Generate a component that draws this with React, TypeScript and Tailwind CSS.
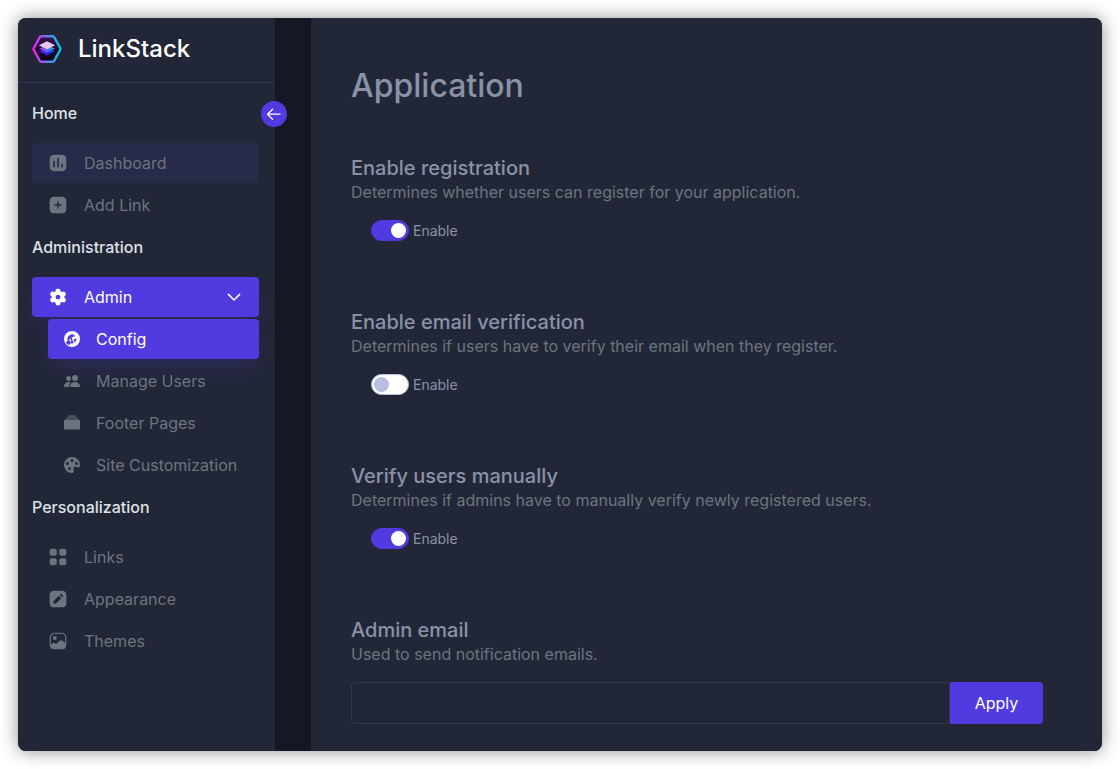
import React, { type ReactNode } from "react";
import {
  BsCollectionFill,
  BsPaletteFill,
  BsPeopleFill,
  BsWrenchAdjustableCircleFill,
} from "react-icons/bs";

function Logo() {
  return (
    <svg viewBox="0 0 30 30" className="size-[30px] shrink-0" aria-hidden="true">
      <defs>
        <linearGradient id="rim" x1="0" x2="1" y1="0" y2="0">
          <stop offset="0" stopColor="#f21cf0" />
          <stop offset="0.5" stopColor="#6a7bf0" />
          <stop offset="1" stopColor="#06c3dc" />
        </linearGradient>
        <linearGradient id="core" x1="0" x2="0" y1="0" y2="1">
          <stop offset="0" stopColor="#351150" />
          <stop offset="1" stopColor="#08020f" />
        </linearGradient>
        <linearGradient id="mid" x1="0" x2="1" y1="0" y2="0">
          <stop offset="0" stopColor="#b026f5" />
          <stop offset="1" stopColor="#18a8ee" />
        </linearGradient>
        <linearGradient id="low" x1="0" x2="1" y1="0" y2="0">
          <stop offset="0" stopColor="#6a10d8" />
          <stop offset="0.6" stopColor="#1522ff" />
          <stop offset="1" stopColor="#1260c8" />
        </linearGradient>
      </defs>
      <path
        d="M9.300 2.300h11.400q1 0 1.600 1l5.700 10.400q.7 1.300 0 2.600l-5.700 10.400q-.6 1-1.600 1H9.300q-1 0-1.600-1L2 16.300q-.7-1.300 0-2.600L7.700 3.300q.6-1 1.600-1z"
        fill="url(#core)"
        stroke="url(#rim)"
        strokeWidth="2.400"
      />
      <path d="M7 17.300l8-3.300 8 3.300-8 4.200z" fill="url(#low)" />
      <path d="M7 14.500l8-3.300 8 3.300-8 4.200z" fill="url(#mid)" />
      <path d="M6.800 11.200L15 7.300l8.200 3.900L15 15.200z" fill="#e6c8ec" />
    </svg>
  );
}

const glyph = "size-5 shrink-0";

function ChartIcon() {
  return (
    <svg viewBox="0 0 24 24" className={glyph} fill="currentColor" fillRule="evenodd" aria-hidden="true">
      <path d="M7.810 2H16.190C19.830 2 22 4.170 22 7.810V16.190C22 19.830 19.830 22 16.190 22H7.810C4.170 22 2 19.830 2 16.190V7.810C2 4.170 4.170 2 7.810 2ZM7.200 9.300C6.600 9.300 6.200 9.700 6.200 10.300V16.600C6.200 17.200 6.600 17.600 7.200 17.600S8.200 17.200 8.200 16.600V10.300C8.200 9.700 7.800 9.300 7.200 9.300ZM12.100 6C11.500 6 11.100 6.400 11.100 7V16.600C11.100 17.200 11.500 17.600 12.100 17.600S13.100 17.200 13.100 16.600V7C13.100 6.400 12.700 6 12.100 6ZM16.900 12.800C16.300 12.800 15.900 13.200 15.900 13.800V16.600C15.900 17.200 16.300 17.600 16.900 17.600S17.900 17.200 17.900 16.600V13.800C17.900 13.200 17.500 12.800 16.900 12.800Z" />
    </svg>
  );
}

function PlusIcon() {
  return (
    <svg viewBox="0 0 24 24" className={glyph} fill="currentColor" fillRule="evenodd" aria-hidden="true">
      <path d="M7.330 2H16.660C20.060 2 22 3.920 22 7.330V16.670C22 20.060 20.070 22 16.670 22H7.330C3.920 22 2 20.060 2 16.670V7.330C2 3.920 3.920 2 7.330 2ZM12.820 12.830H15.660C16.120 12.820 16.490 12.450 16.490 11.990C16.490 11.530 16.120 11.160 15.660 11.160H12.820V8.340C12.820 7.880 12.450 7.510 11.990 7.510C11.530 7.510 11.160 7.880 11.160 8.340V11.160H8.330C7.870 11.160 7.500 11.540 7.500 11.990C7.500 12.450 7.870 12.820 8.330 12.830H11.160V15.660C11.160 16.120 11.530 16.490 11.990 16.490C12.450 16.490 12.820 16.120 12.820 15.660V12.830Z" />
    </svg>
  );
}

function GearIcon() {
  return (
    <svg viewBox="0 0 24 24" className={glyph} fill="currentColor" fillRule="evenodd" aria-hidden="true">
      <path d="M20.402 13.580C20.760 13.770 21.036 14.070 21.230 14.370C21.608 14.990 21.577 15.750 21.210 16.420L20.494 17.620C20.116 18.260 19.411 18.660 18.686 18.660C18.328 18.660 17.930 18.560 17.603 18.360C17.337 18.190 17.031 18.130 16.704 18.130C15.692 18.130 14.844 18.960 14.814 19.950C14.814 21.100 13.873 22 12.697 22H11.307C10.121 22 9.180 21.100 9.180 19.950C9.160 18.960 8.312 18.130 7.300 18.130C6.963 18.130 6.656 18.190 6.401 18.360C6.074 18.560 5.665 18.660 5.318 18.660C4.582 18.660 3.877 18.260 3.499 17.620L2.794 16.420C2.416 15.770 2.395 14.990 2.774 14.370C2.937 14.070 3.244 13.770 3.591 13.580C3.877 13.440 4.061 13.210 4.235 12.940C4.746 12.080 4.439 10.950 3.571 10.440C2.559 9.870 2.232 8.600 2.814 7.610L3.499 6.430C4.092 5.440 5.359 5.090 6.381 5.670C7.270 6.150 8.425 5.830 8.946 4.980C9.109 4.700 9.201 4.400 9.180 4.100C9.160 3.710 9.272 3.340 9.467 3.040C9.845 2.420 10.530 2.020 11.276 2H12.717C13.474 2 14.159 2.420 14.537 3.040C14.721 3.340 14.844 3.710 14.814 4.100C14.793 4.400 14.885 4.700 15.049 4.980C15.570 5.830 16.724 6.150 17.623 5.670C18.635 5.090 19.912 5.440 20.494 6.430L21.179 7.610C21.772 8.600 21.445 9.870 20.422 10.440C19.554 10.950 19.247 12.080 19.769 12.940C19.932 13.210 20.116 13.440 20.402 13.580ZM9.109 12.010C9.109 13.580 10.407 14.830 12.012 14.830C13.617 14.830 14.885 13.580 14.885 12.010C14.885 10.440 13.617 9.180 12.012 9.180C10.407 9.180 9.109 10.440 9.109 12.010Z" />
    </svg>
  );
}

function GridIcon() {
  return (
    <svg viewBox="0 0 24 24" className={glyph} fill="currentColor" aria-hidden="true">
      <rect x="2" y="2" width="8.500" height="8.500" rx="2.500" />
      <rect x="13.500" y="2" width="8.500" height="8.500" rx="2.500" />
      <rect x="2" y="13.500" width="8.500" height="8.500" rx="2.500" />
      <rect x="13.500" y="13.500" width="8.500" height="8.500" rx="2.500" />
    </svg>
  );
}

function PencilIcon() {
  return (
    <svg viewBox="0 0 24 24" className={glyph} fill="currentColor" fillRule="evenodd" aria-hidden="true">
      <path d="M7.330 2H16.670C20.070 2 22 3.930 22 7.330V16.670C22 20.070 20.070 22 16.670 22H7.330C3.930 22 2 20.070 2 16.670V7.330C2 3.930 3.930 2 7.330 2ZM13.100 8L7.200 13.800C6.900 14.100 6.700 14.500 6.700 14.900L6.500 16.900C6.500 17.300 6.800 17.600 7.200 17.600L9.200 17.400C9.600 17.400 10 17.200 10.300 16.900L16 11ZM14.100 7.100L16.900 10L17.700 9.200C18.200 8.700 18.200 7.900 17.700 7.400L16.600 6.400C16.100 5.900 15.400 5.900 14.900 6.400Z" />
    </svg>
  );
}

function ImageIcon() {
  return (
    <svg viewBox="0 0 24 24" className={glyph} aria-hidden="true">
      <rect x="2.700" y="2.700" width="18.600" height="18.600" rx="5" fill="none" stroke="currentColor" strokeWidth="1.400" />
      <circle cx="8.200" cy="8.300" r="2.400" fill="currentColor" />
      <path
        d="M2.500 17.500L5.600 14.700C6.400 14 7.300 14 8.100 14.600C9.300 15.500 10.300 15.600 11.300 14.500L14 11.800C15.100 10.700 16.600 10.700 17.700 11.700L21.600 15.500V17C21.600 20 20 21.700 17 21.700H7C4.300 21.700 2.500 20 2.500 17.500Z"
        fill="currentColor"
      />
    </svg>
  );
}

function ChevronIcon() {
  return (
    <svg viewBox="0 0 24 24" className="size-[18px]" fill="none" stroke="currentColor" strokeWidth="2" strokeLinecap="round" strokeLinejoin="round" aria-hidden="true">
      <path d="M4.500 8.500l7.500 7.500 7.500-7.500" />
    </svg>
  );
}

function ArrowIcon() {
  return (
    <svg viewBox="0 0 24 24" className="size-5" fill="none" stroke="currentColor" strokeWidth="1.500" strokeLinecap="round" strokeLinejoin="round" aria-hidden="true">
      <path d="M4.250 12.270H19.250M10.300 18.300L4.250 12.270L10.300 6.250" />
    </svg>
  );
}

function SectionTitle({ children }: { children: ReactNode }) {
  return <h2 className="flex h-[50px] items-start pt-2 font-medium leading-6 text-[#dee2e6]">{children}</h2>;
}

function NavLink({ icon, label, tone = "" }: { icon: ReactNode; label: string; tone?: string }) {
  return (
    <a href="#" className={`flex h-10 items-center gap-4 rounded px-4 ${tone}`}>
      {icon}
      {label}
    </a>
  );
}

function Sidebar() {
  return (
    <aside className="relative w-[257px] shrink-0 bg-[#222738]">
      <a href="#" className="flex h-[65px] items-center gap-4 border-b border-[#30384f] px-[14px] pb-[2px] text-2xl font-medium text-white">
        <Logo />
        LinkStack
      </a>
      <button
        type="button"
        aria-label="Collapse sidebar"
        className="absolute -right-3 top-[83px] grid size-[26px] place-items-center rounded-full bg-[#503be0] text-white"
      >
        <ArrowIcon />
      </button>
      <nav className="pl-[14px] pr-4 pt-[10px] text-[#6c757d]">
        <SectionTitle>Home</SectionTitle>
        <div className="mb-[2px] flex flex-col gap-[2px]">
          <NavLink icon={<ChartIcon />} label="Dashboard" tone="bg-[#272a48]" />
          <NavLink icon={<PlusIcon />} label="Add Link" />
        </div>
        <SectionTitle>Administration</SectionTitle>
        <div className="mb-[2px] flex flex-col gap-[2px]">
          <button
            type="button"
            aria-expanded="true"
            className="flex h-10 items-center gap-4 rounded bg-[#503be0] px-4 text-white shadow-[0_10px_20px_-5px_rgba(80,59,224,0.25)]"
          >
            <GearIcon />
            <span className="grow text-left">Admin</span>
            <ChevronIcon />
          </button>
          <div className="flex flex-col gap-[2px] pl-4">
            <NavLink
              icon={<BsWrenchAdjustableCircleFill className="size-4" />}
              label="Config"
              tone="bg-[#503be0] text-white shadow-[0_10px_20px_-5px_rgba(80,59,224,0.25)]"
            />
            <NavLink icon={<BsPeopleFill className="size-4" />} label="Manage Users" />
            <NavLink icon={<BsCollectionFill className="size-4" />} label="Footer Pages" />
            <NavLink icon={<BsPaletteFill className="size-4" />} label="Site Customization" />
          </div>
        </div>
        <SectionTitle>Personalization</SectionTitle>
        <div className="mb-[2px] flex flex-col gap-[2px]">
          <NavLink icon={<GridIcon />} label="Links" />
          <NavLink icon={<PencilIcon />} label="Appearance" />
          <NavLink icon={<ImageIcon />} label="Themes" />
        </div>
      </nav>
    </aside>
  );
}

function SettingHeading({ title, text }: { title: string; text: string }) {
  return (
    <>
      <h2 className="text-xl font-medium leading-6 text-[#8a92a6]">{title}</h2>
      <p className="leading-6">{text}</p>
    </>
  );
}

function ToggleSetting({ title, text, on }: { title: string; text: string; on: boolean }) {
  return (
    <section className="h-[154px]">
      <SettingHeading title={title} text={text} />
      <label className="ml-5 mt-4 flex w-fit items-center gap-1 text-sm text-[#8a92a6]">
        <input
          type="checkbox"
          role="switch"
          defaultChecked={on}
          className="flex h-[21px] w-[38px] appearance-none items-center rounded-full border border-[#b9bfe0] bg-white px-[2px] before:size-[15px] before:rounded-full before:bg-[#b9bfe0] checked:justify-end checked:border-[#503be0] checked:bg-[#503be0] checked:before:bg-white"
        />
        Enable
      </label>
    </section>
  );
}

export default function App() {
  return (
    <div className="flex min-h-screen bg-white p-[18px] font-['Inter',sans-serif] text-base text-[#6c757d]">
      <div className="flex grow overflow-hidden rounded-lg bg-[#151824] shadow-[0_0_18px_rgba(0,0,0,0.45)]">
        <Sidebar />
        <main className="ml-9 grow bg-[#222738] pb-[27px] pl-10 pr-[59px] pt-12">
          <h1 className="mb-[50px] text-[32px] font-medium leading-10 text-[#8a92a6]">Application</h1>
          <ToggleSetting title="Enable registration" text="Determines whether users can register for your application." on />
          <ToggleSetting title="Enable email verification" text="Determines if users have to verify their email when they register." on={false} />
          <ToggleSetting title="Verify users manually" text="Determines if admins have to manually verify newly registered users." on />
          <section>
            <SettingHeading title="Admin email" text="Used to send notification emails." />
            <form className="mt-4 flex" onSubmit={(event) => event.preventDefault()}>
              <input
                type="email"
                aria-label="Admin email"
                className="h-[42px] min-w-0 grow rounded border border-[#30384f] bg-transparent px-4 text-[#8a92a6]"
              />
              <button type="submit" className="h-[42px] w-[93px] rounded-r bg-[#503be0] text-white">
                Apply
              </button>
            </form>
          </section>
        </main>
      </div>
    </div>
  );
}
